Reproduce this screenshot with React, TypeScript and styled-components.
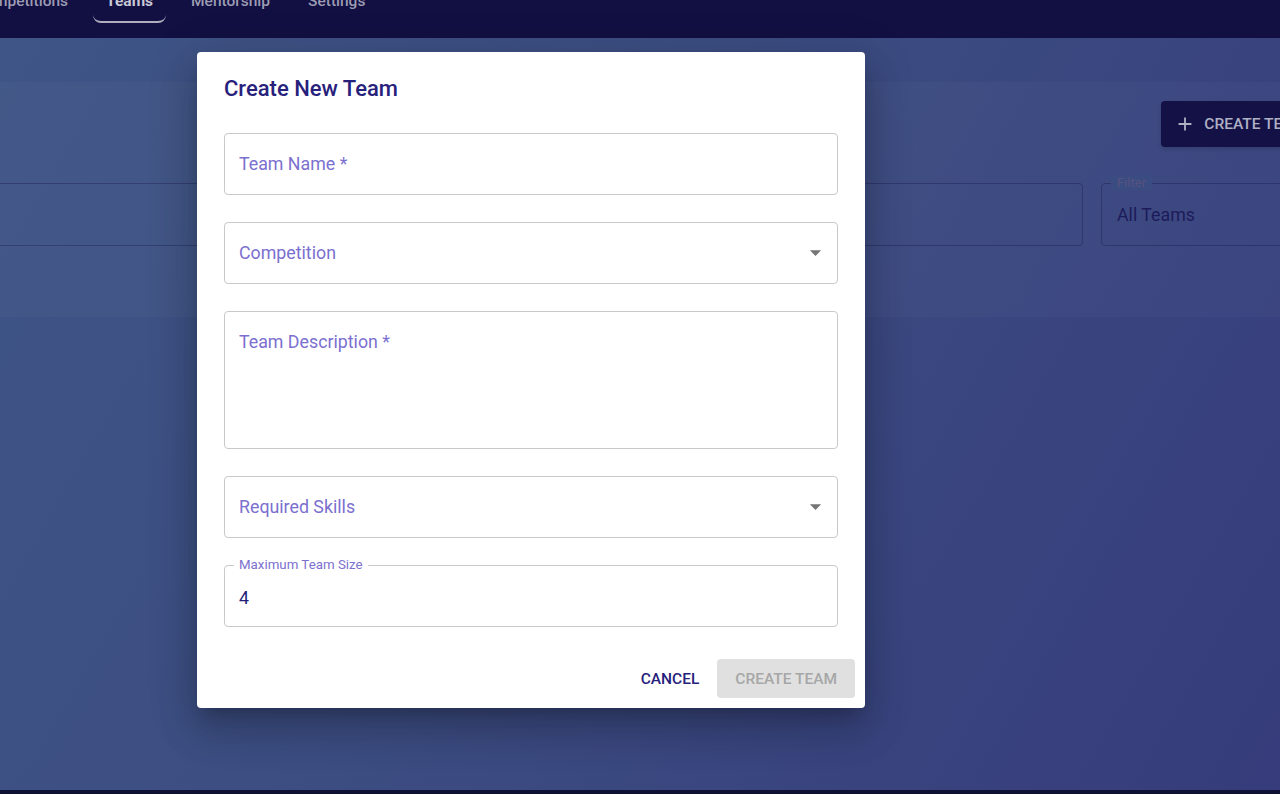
import React from "react";
import styled, { createGlobalStyle } from "styled-components";

const GlobalStyle = createGlobalStyle`
	body {
		margin: 0;
		font-family: Roboto, "Liberation Sans", sans-serif;
	}
`;

const NAV_ITEMS = ["Competitions", "Teams", "Mentorship", "Settings"];

const Page = styled.div`
	position: relative;
	min-height: 794px;
	display: flex;
	flex-direction: column;
	overflow: hidden;
	background: linear-gradient(120deg, #3f5586 0%, #3c4d82 45%, #363c7b 100%);
`;

const NavBar = styled.div`
	height: 38px;
	background: #120f42;
	overflow: hidden;
	flex-shrink: 0;
`;

const NavTabs = styled.div`
	display: flex;
	gap: 12px;
	margin: -12px 0 0 -38px;
`;

const NavTab = styled.div<{ $active?: boolean }>`
	padding: 0 13px 7px;
	line-height: 26px;
	font-size: 15.5px;
	font-weight: ${(p) => (p.$active ? 700 : 500)};
	color: ${(p) => (p.$active ? "#c9c9d6" : "#9c9cb3")};
	border-bottom: 2px solid ${(p) => (p.$active ? "#aeaec0" : "transparent")};
	border-radius: 8px;
	white-space: nowrap;
`;

const Main = styled.div`
	flex: 1;
	padding-top: 44px;
`;

const HeaderPanel = styled.div`
	display: flex;
	flex-direction: column;
	gap: 36px;
	width: 1430px;
	margin-left: -60px;
	padding: 19px 27px 71px 0;
	background: rgba(255, 255, 255, 0.025);
`;

const ActionRow = styled.div`
	display: flex;
	justify-content: flex-end;
	padding-right: 40px;
`;

const PrimaryButton = styled.div`
	display: flex;
	align-items: center;
	height: 46px;
	padding: 0 24px 0 13px;
	border-radius: 4px;
	background: #141146;
	color: #aeb0c4;
	font-size: 15.5px;
	font-weight: 500;
	text-transform: uppercase;
	box-shadow: 0 2px 4px rgba(0, 0, 0, 0.15);

	svg {
		margin-right: 8px;
	}
`;

const SearchRow = styled.div`
	display: grid;
	grid-template-columns: 1143px 1fr;
	gap: 18px;
`;

const BgField = styled.div`
	position: relative;
	height: 61px;
	border: 1px solid rgba(20, 20, 70, 0.35);
	border-radius: 4px;
	display: flex;
	align-items: center;
	padding-left: 15px;
	font-size: 17.8px;
	color: #1c1b5a;
`;

const BgLabel = styled.span`
	position: absolute;
	top: -9px;
	left: 9px;
	padding: 0 6px;
	font-size: 13px;
	color: #57527f;
	background: #3b4c82;
`;

const Footer = styled.div`
	height: 4px;
	background: #0e1034;
`;

const Dialog = styled.div`
	position: absolute;
	left: 197px;
	top: 52px;
	width: 668px;
	background: #fff;
	border-radius: 4px;
	box-shadow: 0 11px 15px -7px rgba(0, 0, 0, 0.2), 0 24px 38px 3px rgba(0, 0, 0, 0.14),
		0 9px 46px 8px rgba(0, 0, 0, 0.12);
	display: flex;
	flex-direction: column;
`;

const Title = styled.h2`
	margin: 0;
	padding: 19px 27px 0;
	font-size: 22px;
	line-height: 35px;
	font-weight: 500;
	color: #27217c;
`;

const Form = styled.div`
	display: flex;
	flex-direction: column;
	gap: 27px;
	padding: 27px 27px 0;
`;

const Field = styled.div<{ $tall?: boolean }>`
	position: relative;
	height: ${(p) => (p.$tall ? 138 : 62)}px;
	box-sizing: border-box;
	border: 1px solid #c9c9c9;
	border-radius: 4px;
	display: flex;
	align-items: flex-start;
	justify-content: space-between;
	padding: 18px 8px 0 14px;
`;

const Placeholder = styled.span`
	font-size: 17.8px;
	line-height: 24px;
	color: #7b70cf;
`;

const Value = styled.span`
	font-size: 17.8px;
	line-height: 24px;
	margin-top: 2px;
	color: #231d78;
`;

const NotchLabel = styled.span`
	position: absolute;
	top: -9px;
	left: 9px;
	padding: 0 5px;
	background: #fff;
	font-size: 13.3px;
	line-height: 16px;
	color: #7b70cf;
`;

const Actions = styled.div`
	display: flex;
	justify-content: flex-end;
	align-items: center;
	gap: 9px;
	padding: 32px 10px 10px;
`;

const TextButton = styled.div`
	height: 39px;
	display: flex;
	align-items: center;
	padding: 0 9px;
	font-size: 15.5px;
	font-weight: 500;
	text-transform: uppercase;
	color: #27217c;
`;

const DisabledButton = styled(TextButton)`
	padding: 0 18px;
	border-radius: 4px;
	background: #e0e0e0;
	color: #a7a7a7;
`;

const ArrowDown = () => (
	<svg width="27" height="27" viewBox="0 0 24 24" style={{ marginTop: -2 }}>
		<path d="M7 10l5 5 5-5z" fill="#757575" />
	</svg>
);

const PlusIcon = () => (
	<svg width="22" height="22" viewBox="0 0 24 24">
		<path d="M19 13h-6v6h-2v-6H5v-2h6V5h2v6h6v2z" fill="#aeb0c4" />
	</svg>
);

export default function App() {
	return (
		<>
			<GlobalStyle />
			<Page>
				<NavBar>
					<NavTabs>
						{NAV_ITEMS.map((item) => (
							<NavTab key={item} $active={item === "Teams"}>
								{item}
							</NavTab>
						))}
					</NavTabs>
				</NavBar>

				<Main>
					<HeaderPanel>
						<ActionRow>
							<PrimaryButton>
								<PlusIcon />
								Create Team
							</PrimaryButton>
						</ActionRow>
						<SearchRow>
							<BgField />
							<BgField>
								<BgLabel>Filter</BgLabel>
								All Teams
							</BgField>
						</SearchRow>
					</HeaderPanel>
				</Main>
				<Footer />

				<Dialog>
					<Title>Create New Team</Title>
					<Form>
						<Field>
							<Placeholder>Team Name *</Placeholder>
						</Field>
						<Field>
							<Placeholder>Competition</Placeholder>
							<ArrowDown />
						</Field>
						<Field $tall>
							<Placeholder>Team Description *</Placeholder>
						</Field>
						<Field>
							<Placeholder>Required Skills</Placeholder>
							<ArrowDown />
						</Field>
						<Field>
							<NotchLabel>Maximum Team Size</NotchLabel>
							<Value>4</Value>
						</Field>
					</Form>
					<Actions>
						<TextButton>Cancel</TextButton>
						<DisabledButton>Create Team</DisabledButton>
					</Actions>
				</Dialog>
			</Page>
		</>
	);
}
